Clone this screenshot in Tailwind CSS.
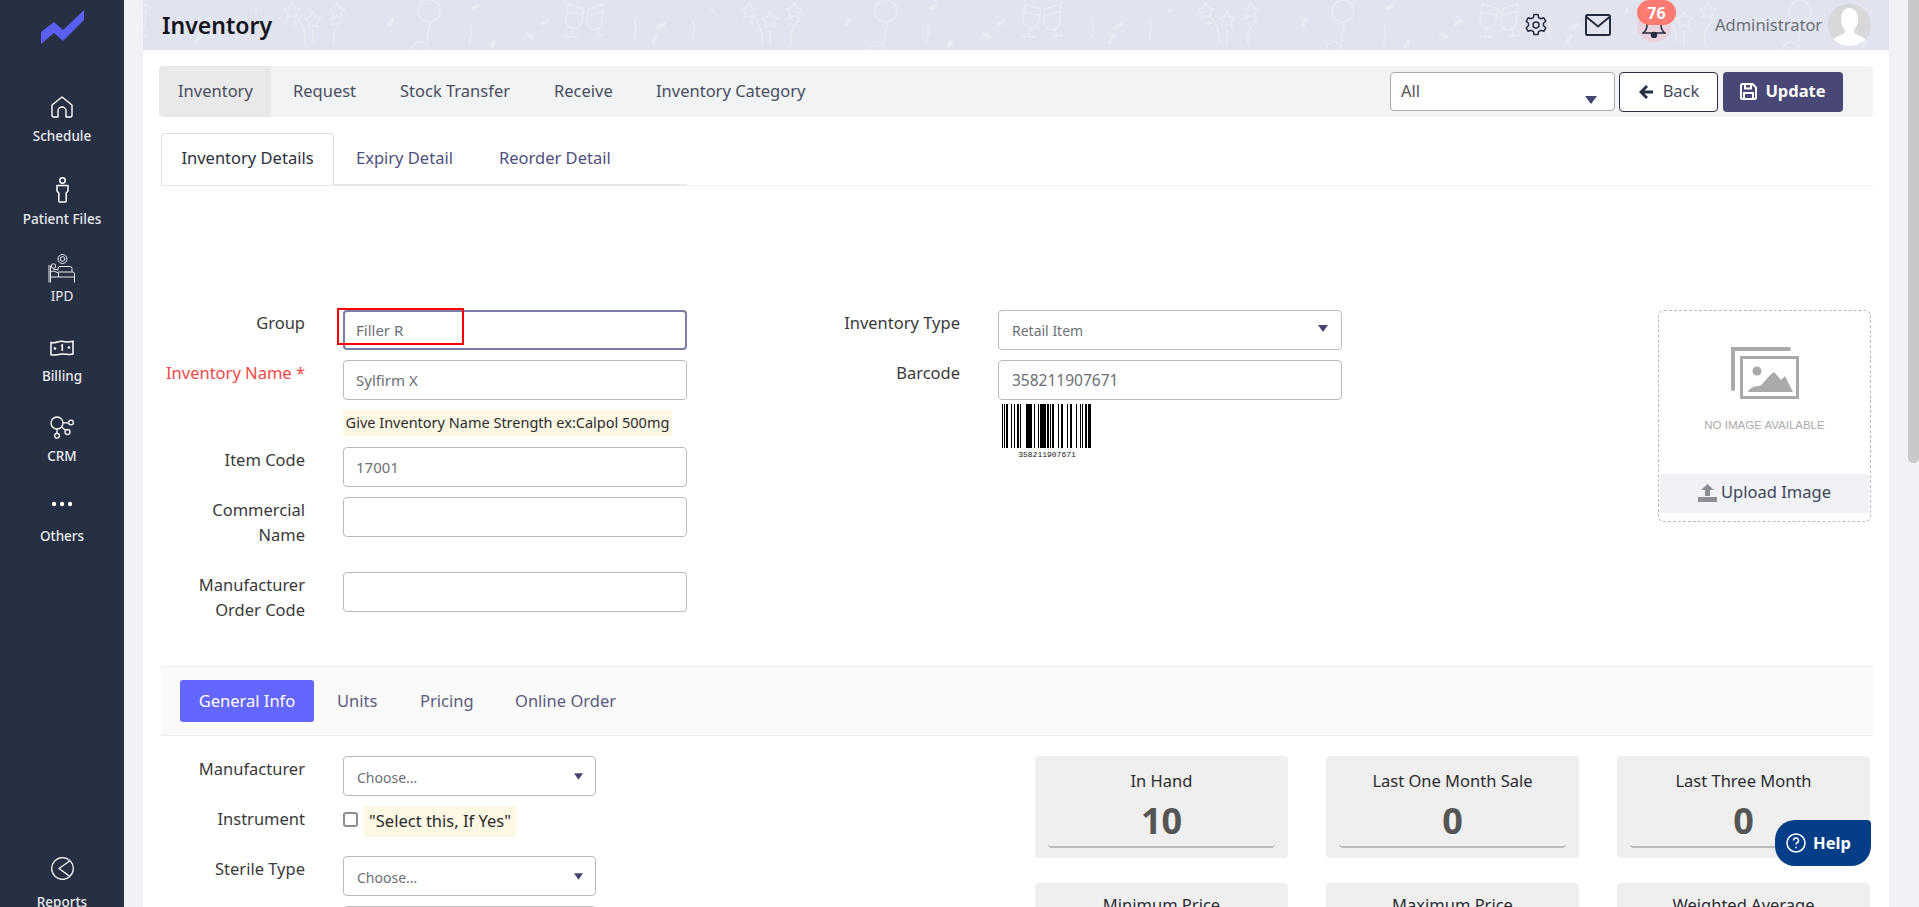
<!doctype html>
<html lang="en">
<head>
<meta charset="UTF-8" />
<title>Inventory</title>
<script src="https://cdn.jsdelivr.net/npm/@tailwindcss/browser@4"></script>
</head>
<body class="flex h-screen overflow-hidden bg-[#f1f2f5] font-['Noto_Sans',sans-serif] text-[16.5px] text-[#3a3a3a]">

<!-- sidebar -->
<aside class="flex h-[907px] w-[124px] shrink-0 flex-col items-center overflow-hidden bg-[#272f43] text-[13.5px] font-medium leading-[18px] text-[#e9eaee]">
	<svg class="mt-[10px] h-[34px] w-[43px] shrink-0" viewBox="0 0 43 34" fill="#5a5ff0"><path d="M0 22 13 12 22 20 43 0V10L22 31 13 23 0 34z"/></svg>
	<div class="h-[46px] shrink-0"></div>
	<a class="flex h-[55px] shrink-0 flex-col items-center justify-end">
		<svg class="mb-[9px] h-[22px] w-[22px]" viewBox="0 0 22 22" fill="none" stroke="#fff" stroke-width="1.400" stroke-linejoin="round"><path d="M1 9 11 1l10 8v10.500a1.500 1.500 0 0 1-1.500 1.500H15v-6a4 4 0 0 0-8 0v6H2.500A1.500 1.500 0 0 1 1 19.500z"/></svg>
		<span>Schedule</span>
	</a>
	<a class="flex h-[83px] shrink-0 flex-col items-center justify-end">
		<svg class="mb-[7px] h-[26px] w-[13px]" viewBox="0 0 13 26" fill="none" stroke="#fff" stroke-width="1.500"><circle cx="6.500" cy="3.500" r="2.700"/><path d="M1 8.500h11v5.500l-1.800 2v8a1 1 0 0 1-1 1H3.800a1 1 0 0 1-1-1v-8L1 14z" stroke-linejoin="round"/></svg>
		<span>Patient Files</span>
	</a>
	<a class="flex h-[77px] shrink-0 flex-col items-center justify-end">
		<svg class="mb-[4px] h-[29px] w-[28px]" viewBox="0 0 28 29" fill="none" stroke="#e9eaee" stroke-width="1"><circle cx="14.500" cy="5" r="4.500"/><circle cx="14.500" cy="5" r="2.300"/><circle cx="5.500" cy="12" r="2.200"/><path d="M1 11v17.500M2.500 11.500v17M2.500 23h23.500M26.500 28.500V20a2 2 0 0 0-2-2H10M5 15l5 1v-1.500a2 2 0 0 1 2-2h10a2 2 0 0 1 2 2V18M2.500 18l3-1 5 2v4"/></svg>
		<span class="font-normal">IPD</span>
	</a>
	<a class="flex h-[80px] shrink-0 flex-col items-center justify-end">
		<svg class="mb-[11px] h-[16px] w-[24px]" viewBox="0 0 24 16" fill="none" stroke="#fff" stroke-width="1.500"><path d="M1 2.500c4 1.500 8-2 11-1.200s7 1 11 0V14c-4 1.200-8-.5-11 0s-7 1.500-11 .7z"/><path d="M11 6l1.300-1v6"/><circle cx="5" cy="8.500" r=".6"/><circle cx="19" cy="7.500" r=".6"/></svg>
		<span>Billing</span>
	</a>
	<a class="flex h-[80px] shrink-0 flex-col items-center justify-end">
		<svg class="mb-[8px] h-[23px] w-[24px]" viewBox="0 0 24 23" fill="none" stroke="#fff" stroke-width="1.300"><circle cx="7" cy="7" r="6"/><circle cx="21" cy="6.500" r="2.400"/><circle cx="17.500" cy="16" r="2.500"/><circle cx="7" cy="19.800" r="2.400"/><path d="M13 6.800h5.600M11.500 11l4.500 3.500M7 13v4.400"/></svg>
		<span>CRM</span>
	</a>
	<a class="flex h-[80px] shrink-0 flex-col items-center justify-end">
		<svg class="mb-[20px] h-[6px] w-[22px]" viewBox="0 0 22 6" fill="#fff"><circle cx="3" cy="3" r="2.200"/><circle cx="11" cy="3" r="2.200"/><circle cx="19" cy="3" r="2.200"/></svg>
		<span>Others</span>
	</a>
	<a class="mt-auto -mb-[4px] flex shrink-0 flex-col items-center">
		<svg class="mb-[13px] h-[23px] w-[23px]" viewBox="0 0 23 23" fill="none" stroke="#fff" stroke-width="1.200"><circle cx="11.500" cy="11.500" r="10.800"/><path d="M19 3.700 8 11.500l11 8"/></svg>
		<span>Reports</span>
	</a>
</aside>

<main class="ml-[19px] flex h-[907px] w-[1746px] shrink-0 flex-col overflow-hidden bg-white">
	<!-- header -->
	<header class="relative flex h-[50px] shrink-0 items-center overflow-hidden bg-[#e1e4ee]">
		<svg class="absolute inset-0 h-[50px] w-full" fill="none" stroke="#e9ebf2" stroke-width="1.500">
			<defs>
				<pattern id="party" x="416" y="0" width="457" height="50" patternUnits="userSpaceOnUse">
					<path d="M9 4 25 9 22 24a8 8 0 0 1-15-3zM45 4 29 9 28 24a8 8 0 0 0 15 1zM8 12l16 3M30 15l16-4M15 27 12 36M6 36l13 1M38 27l3 9M35 37l12-2"/>
					<path d="M78 17c-6 6 3 9-3 15 0 3 1 5 2 6M135 20c-4 4 4 7-1 12v8"/>
					<path d="M154 10v1M105 24l-6 4M98 36l-4 6" stroke-width="4" stroke-linecap="round"/>
					<path d="M190 3l3 5 5 1-4 4 1 5-5-2-5 2 1-5-4-4 5-1zM235 3l3 5 5 1-4 4 1 5-5-2-5 2 1-5-4-4 5-1zM211 12l3 5 5 1-4 4 1 5-5-2-5 2 1-5-4-4 5-1zM196 18c5 8 8 14 7 26M240 20c-8 8-9 14-8 24M211 30v16M190 23h6M193 20v6M228 24h6"/>
					<path d="M327 0a11 11 0 1 1 0 22a11 11 0 1 1 0-22M327 22c4 6-4 8-1 20M310 50a8 8 0 0 1 16 0M370 25c-5 5 3 8-2 14v7"/>
					<path d="M372 8l4-2M290 20l-3 5M440 24l5-3M425 34l5 3M390 46l2-4" stroke-width="4" stroke-linecap="round"/>
				</pattern>
			</defs>
			<rect width="100%" height="50" fill="url(#party)" stroke="none"/>
		</svg>
		<h1 class="relative ml-[19px] text-[23px] font-semibold text-[#15151c]">Inventory</h1>
		<div class="relative ml-auto flex items-center">
			<svg class="h-[24px] w-[24px]" viewBox="0 0 24 24" fill="none" stroke="#252c3f" stroke-width="1.500" stroke-linejoin="round"><circle cx="12" cy="12" r="3"/><path d="M10 1.500h4l.6 3 2.300 1.300 2.900-1 2 3.500-2.300 2v2.500l2.300 2-2 3.500-2.900-1-2.300 1.300-.6 3h-4l-.6-3-2.300-1.300-2.900 1-2-3.500 2.300-2v-2.500l-2.300-2 2-3.500 2.900 1 2.300-1.300z"/></svg>
			<svg class="ml-[37px] h-[22px] w-[26px]" viewBox="0 0 26 22" fill="none" stroke="#252c3f" stroke-width="2"><rect x="1" y="1" width="24" height="20" rx="1.500"/><path d="m1.500 3 11.500 9.500L24.500 3"/></svg>
			<div class="relative ml-[26px] h-[34px] w-[34px]">
				<div class="absolute inset-0 top-[2px] rounded-full bg-[#e8d3dc]"></div>
				<svg class="absolute left-[5px] top-[6px] h-[24px] w-[24px]" viewBox="0 0 24 24" fill="none" stroke="#252c3f" stroke-width="1.500"><path d="M1 19h22c-3-2-4-5-4-8V3H5v8c0 3-1 6-4 8z"/><circle cx="12" cy="21" r="2.500" fill="#252c3f"/></svg>
				<span class="absolute left-0 -top-[8px] flex h-[25px] w-[39px] items-center justify-center rounded-[13px] bg-[#ff7b72] text-[16px] font-bold text-white">76</span>
			</div>
			<span class="ml-[44px] w-[113px] text-[#6d6f76]">Administrator</span>
			<div class="mr-[18px] h-[42px] w-[43px] overflow-hidden rounded-full bg-[#d8d8d8]">
				<svg class="h-[42px] w-[43px]" viewBox="0 0 43 42" fill="#fff"><path d="M21 4c6 0 9 5 9 11 0 5-2 9-4 11 0 3 1 4 4 5 5 2 9 3 10 11H3c1-7 5-9 10-11 3-1 4-2 4-5-2-2-4-6-4-11 0-6 3-11 8-11z"/></svg>
			</div>
		</div>
	</header>

	<div class="flex flex-col px-[16px]">
		<!-- top tabs -->
		<div class="mt-[16px] flex h-[51px] items-center rounded-[4px] bg-[#f2f3f5] text-[#484e5f]">
			<a class="flex h-full w-[112px] items-center rounded-l-[4px] bg-[#e9e9e9] pl-[19px]">Inventory</a>
			<a class="ml-[3px] w-[107px] pl-[19px]">Request</a>
			<a class="w-[154px] pl-[19px]">Stock Transfer</a>
			<a class="w-[102px] pl-[19px]">Receive</a>
			<a class="pl-[19px]">Inventory Category</a>
			<div class="relative ml-auto h-[39px] w-[225px] rounded-[4px] border border-[#aaa] bg-white pl-[10px] leading-[36px] text-[#555]">
				All
				<svg class="absolute right-[17px] top-[23px] h-[8px] w-[12px]" viewBox="0 0 12 8" fill="#45466f"><path d="M0 0h12L6 8z"/></svg>
			</div>
			<button class="ml-[4px] flex h-[40px] w-[99px] items-center justify-center gap-[9px] rounded-[4px] border border-[#272f43] bg-white">
				<svg class="h-[16px] w-[16px]" viewBox="0 0 16 16" fill="#272f43"><path d="M8 1 1 8l7 7 2-2-3.500-3.500H15v-3H6.500L10 3z"/></svg>Back
			</button>
			<button class="ml-[5px] mr-[30px] flex h-[40px] w-[120px] items-center justify-center gap-[8px] rounded-[4px] bg-[#484775] font-bold text-white">
				<svg class="h-[17px] w-[17px]" viewBox="0 0 17 17" fill="none" stroke="#fff" stroke-width="2"><path d="M1 2.500A1.500 1.500 0 0 1 2.500 1h10L16 4.500v10a1.500 1.500 0 0 1-1.500 1.500h-12A1.500 1.500 0 0 1 1 14.500zM5 1v4.500h6V1M4 16v-6h9v6"/></svg>Update
			</button>
		</div>

		<!-- detail tabs -->
		<div class="relative mt-[16px] ml-[2px] flex h-[53px] items-end border-b border-[#eceef0]">
			<div class="absolute bottom-[-1px] left-0 h-[2px] w-[526px] bg-[#e8e8e8]"></div>
			<a class="relative flex h-[52px] w-[173px] items-center justify-center rounded-t-[4px] border border-b-0 border-[#dddfe2] bg-white pb-[2px] text-[#2c2f3c]">Inventory Details</a>
			<a class="flex h-[52px] w-[165px] items-center pb-[2px] pl-[22px] text-[#4f4f7d]">Expiry Detail</a>
			<a class="flex h-[52px] items-center pb-[2px] text-[#4f4f7d]">Reorder Detail</a>
		</div>

		<!-- details form -->
		<section class="mt-[124px] ml-[3px] flex h-[356px] items-start">
			<div class="w-[525px] shrink-0">
				<div class="mb-[10px] flex">
					<label class="w-[143px] text-right leading-[25px]">Group</label>
					<div class="relative ml-[38px]">
						<input value="Filler R" class="h-[40px] w-[344px] rounded-[4px] border-2 border-[#7b7da8] bg-white px-[11px] text-[15px] text-[#6c6f75]" />
						<div class="absolute -left-[6px] -top-[2px] h-[37px] w-[127px] border-2 border-[#f00]"></div>
					</div>
				</div>
				<div class="mb-[10px] flex">
					<label class="w-[143px] text-right leading-[25px] text-[#f04848]">Inventory Name *</label>
					<input value="Sylfirm X" class="ml-[38px] h-[40px] w-[344px] rounded-[4px] border border-[#bbb] px-[12px] text-[15px] text-[#6c6f75]" />
				</div>
				<p class="mb-[11px] ml-[181px] flex h-[26px] w-[329px] items-center justify-center whitespace-nowrap bg-[#fdf8e4] text-[14.5px] text-[#2b2b30]">Give Inventory Name Strength ex:Calpol 500mg</p>
				<div class="mb-[10px] flex">
					<label class="w-[143px] text-right leading-[25px]">Item Code</label>
					<input value="17001" class="ml-[38px] h-[40px] w-[344px] rounded-[4px] border border-[#bbb] px-[12px] text-[15px] text-[#6c6f75]" />
				</div>
				<div class="mb-[10px] flex h-[65px]">
					<label class="w-[143px] text-right leading-[25px]">Commercial<br />Name</label>
					<input class="ml-[38px] h-[40px] w-[344px] rounded-[4px] border border-[#bbb]" />
				</div>
				<div class="flex">
					<label class="w-[143px] text-right leading-[25px]">Manufacturer<br />Order Code</label>
					<input class="ml-[38px] h-[40px] w-[344px] rounded-[4px] border border-[#bbb]" />
				</div>
			</div>

			<div class="w-[655px] shrink-0">
				<div class="mb-[10px] flex">
					<label class="w-[273px] text-right leading-[25px]">Inventory Type</label>
					<div class="relative ml-[38px] flex h-[40px] w-[344px] items-center rounded-[4px] border border-[#bbb] pl-[13px] text-[14px] text-[#6c6f75]">
						Retail Item
						<svg class="absolute right-[13px] top-[14px] h-[7px] w-[10px]" viewBox="0 0 10 7" fill="#45466f"><path d="M0 0h10L5 7z"/></svg>
					</div>
				</div>
				<div class="flex">
					<label class="w-[273px] text-right leading-[25px]">Barcode</label>
					<input value="358211907671" class="ml-[38px] h-[40px] w-[344px] rounded-[4px] border border-[#bbb] px-[13px] text-[15.5px] text-[#6c6f75]" />
				</div>
				<div class="ml-[315px] mt-[4px] flex w-[90px] flex-col items-center">
					<svg class="h-[44px] w-[90px]" viewBox="0 0 90 44" fill="#000" shape-rendering="crispEdges"><path d="M0 0h1v44H0zM2 0h1v44H2zM4 0h2v44H4zM9 0h1v44H9zM12 0h1v44h-1zM15 0h2v44h-2zM18 0h1v44h-1zM24 0h6v44h-6zM32 0h1v44h-1zM36 0h1v44h-1zM38 0h6v44h-6zM45 0h2v44h-2zM48 0h1v44h-1zM50 0h2v44h-2zM56 0h1v44h-1zM59 0h2v44h-2zM65 0h1v44h-1zM68 0h2v44h-2zM74 0h1v44h-1zM78 0h1v44h-1zM80 0h1v44h-1zM83 0h2v44h-2zM86 0h3v44h-3z"/></svg>
					<span class="mt-[2px] font-['Liberation_Mono',monospace] text-[8px] leading-[10px] text-[#222]">358211907671</span>
				</div>
			</div>

			<div class="ml-[316px] flex h-[212px] w-[213px] shrink-0 flex-col rounded-[6px] border border-dashed border-[#bbb] p-px">
				<div class="flex flex-1 flex-col items-center pt-[34px]">
					<svg class="h-[53px] w-[69px]" viewBox="0 0 69 53" fill="#aaa"><path d="M3 43V3h56" fill="none" stroke="#aaa" stroke-width="4" stroke-linecap="round"/><path fill-rule="evenodd" d="M10 10h59v43H10zM13 13v37h53V13z"/><path d="M18 46c2-5 7-6 12-6 3-2 8-10 14-14l7 8 4-4 8 16z"/><circle cx="27" cy="25" r="4.500"/></svg>
					<span class="mt-[18px] font-['Liberation_Sans',sans-serif] text-[11.5px] text-[#aaa]">NO IMAGE AVAILABLE</span>
				</div>
				<div class="mb-[7px] flex h-[39px] items-center justify-center gap-[4px] rounded-[4px] bg-[#f1f2f5] pb-[2px] text-[#3d4558]">
					<svg class="h-[18px] w-[19px]" viewBox="0 0 19 18" fill="#8c8f96"><path d="M9.500 0 16 6h-4v6H7V6H3zM0 13h19v5H0z"/></svg>
					Upload Image
				</div>
			</div>
		</section>

		<!-- general info -->
		<div class="ml-[2px] flex h-[70px] items-center border-y border-[#ececee] bg-[#fafafa] pl-[19px] text-[#5a5a80]">
			<a class="flex h-[42px] w-[134px] items-center justify-center rounded-[3px] bg-[#6366ff] text-white">General Info</a>
			<a class="ml-[23px] w-[83px]">Units</a>
			<a class="w-[95px]">Pricing</a>
			<a>Online Order</a>
		</div>

		<section class="ml-[3px] mt-[20px] flex items-start">
			<div class="w-[873px] shrink-0">
				<div class="mb-[10px] flex">
					<label class="w-[143px] text-right leading-[25px]">Manufacturer</label>
					<div class="relative ml-[38px] flex h-[40px] w-[253px] items-center rounded-[4px] border border-[#bbb] pl-[13px] pt-[2px] text-[14px] text-[#6c6f75]">
						Choose...
						<svg class="absolute right-[12px] top-[16px] h-[7px] w-[9px]" viewBox="0 0 10 7" fill="#45466f"><path d="M0 0h10L5 7z"/></svg>
					</div>
				</div>
				<div class="mb-[10px] flex h-[40px]">
					<label class="w-[143px] text-right leading-[25px]">Instrument</label>
					<input type="checkbox" class="ml-[38px] mt-[6px] h-[15px] w-[15px] appearance-none rounded-[3px] border-2 border-[#8c8c8c] bg-white" />
					<span class="ml-[6px] flex h-[31px] w-[152px] items-center justify-center whitespace-nowrap bg-[#fdf8e4] text-[#2b2b30]">"Select this, If Yes"</span>
				</div>
				<div class="mb-[10px] flex">
					<label class="w-[143px] text-right leading-[25px]">Sterile Type</label>
					<div class="relative ml-[38px] flex h-[40px] w-[253px] items-center rounded-[4px] border border-[#bbb] pl-[13px] pt-[2px] text-[14px] text-[#6c6f75]">
						Choose...
						<svg class="absolute right-[12px] top-[16px] h-[7px] w-[9px]" viewBox="0 0 10 7" fill="#45466f"><path d="M0 0h10L5 7z"/></svg>
					</div>
				</div>
				<div class="ml-[181px] h-[40px] w-[253px] rounded-[4px] border border-[#bbb]"></div>
			</div>
			<div class="grid w-[835px] shrink-0 grid-cols-3 gap-x-[38px] gap-y-[25px]">
				<div class="h-[102px] rounded-[4px] bg-[#efefef] px-[13px] pt-[14px] text-center text-[#2b2b30]">
					<p class="leading-[22px]">In Hand</p>
					<p class="mt-[4px] h-[52px] rounded-b-[4px] border-b-2 border-[#bbb] text-[36px] font-bold leading-[50px] text-[#555]">10</p>
				</div>
				<div class="h-[102px] rounded-[4px] bg-[#efefef] px-[13px] pt-[14px] text-center text-[#2b2b30]">
					<p class="leading-[22px]">Last One Month Sale</p>
					<p class="mt-[4px] h-[52px] rounded-b-[4px] border-b-2 border-[#bbb] text-[36px] font-bold leading-[50px] text-[#555]">0</p>
				</div>
				<div class="h-[102px] rounded-[4px] bg-[#efefef] px-[13px] pt-[14px] text-center text-[#2b2b30]">
					<p class="leading-[22px]">Last Three Month</p>
					<p class="mt-[4px] h-[52px] rounded-b-[4px] border-b-2 border-[#bbb] text-[36px] font-bold leading-[50px] text-[#555]">0</p>
				</div>
				<div class="h-[102px] rounded-[4px] bg-[#efefef] px-[13px] pt-[11px] text-center text-[#2b2b30]"><p class="leading-[22px]">Minimum Price</p></div>
				<div class="h-[102px] rounded-[4px] bg-[#efefef] px-[13px] pt-[11px] text-center text-[#2b2b30]"><p class="leading-[22px]">Maximum Price</p></div>
				<div class="h-[102px] rounded-[4px] bg-[#efefef] px-[13px] pt-[11px] text-center text-[#2b2b30]"><p class="leading-[22px]">Weighted Average</p></div>
			</div>
		</section>
	</div>
</main>

<!-- scrollbar -->
<div class="ml-[19px] h-[463px] w-[11px] shrink-0 rounded-b-[6px] bg-[#c8c8c8]"></div>

<button class="fixed left-[1775px] top-[820px] flex h-[46px] w-[96px] items-center justify-center gap-[7px] rounded-[20px] rounded-tr-[4px] bg-[#053d87] pr-[9px] font-bold text-white">
	<svg class="h-[20px] w-[20px]" viewBox="0 0 20 20" fill="none" stroke="#fff" stroke-width="1.500"><circle cx="10" cy="10" r="9"/><path d="M7.500 7.500a2.500 2.500 0 1 1 3.500 2.300c-.8.4-1 .9-1 1.700M10 13.800v1.400"/></svg>Help
</button>
</body>
</html>
